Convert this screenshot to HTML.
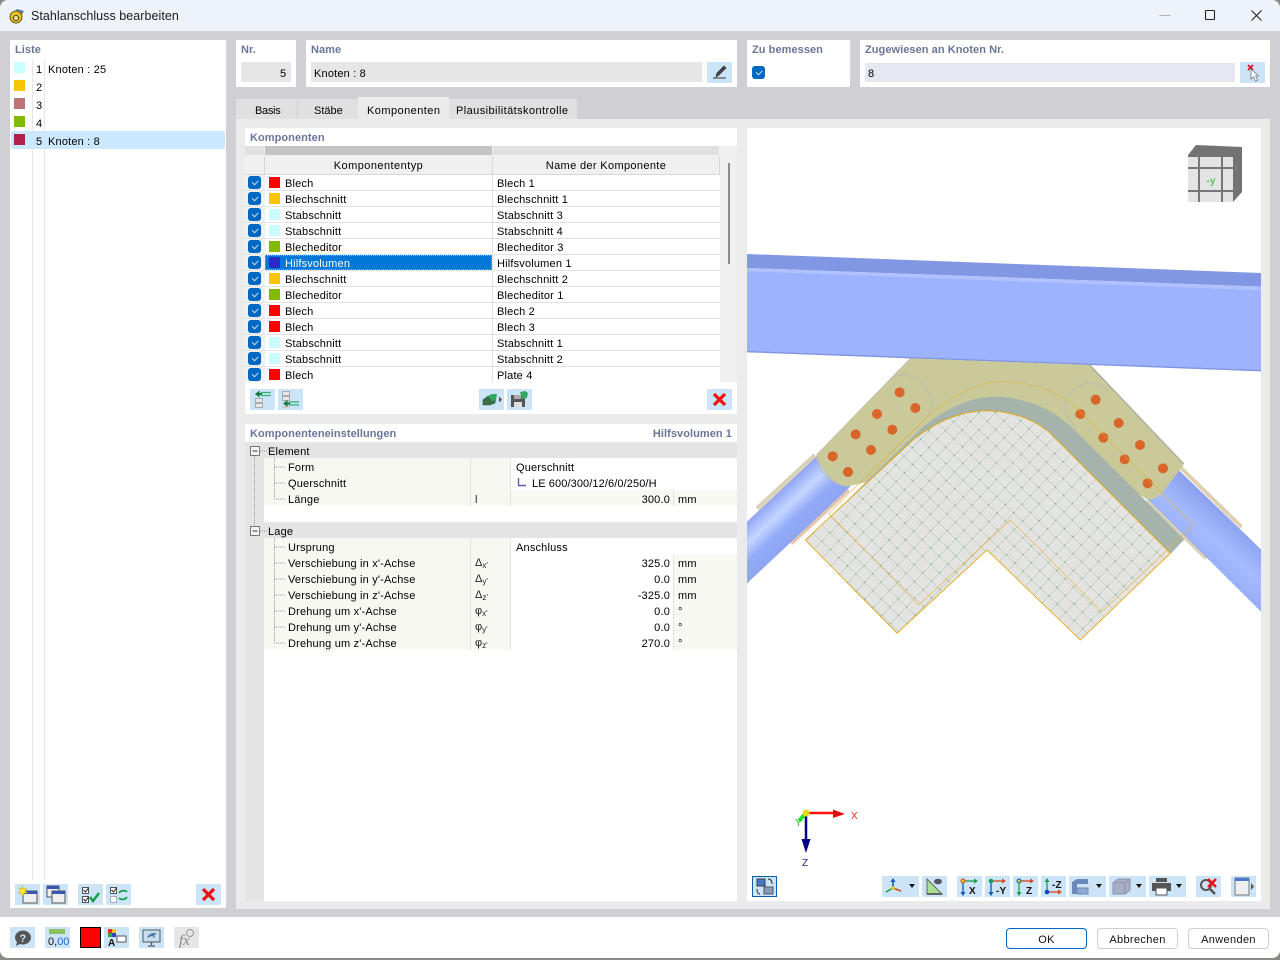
<!DOCTYPE html>
<html><head><meta charset="utf-8"><title>Stahlanschluss bearbeiten</title>
<style>
html,body{margin:0;padding:0;width:1280px;height:960px;overflow:hidden;background:#8a8a86}
*{box-sizing:border-box}
body{font-family:"Liberation Sans",sans-serif;font-size:11px;letter-spacing:.18px;color:#000;position:relative}
div,span,svg{position:absolute}
.t{white-space:nowrap;line-height:16px;height:16px;transform:translateY(1px)}
.h{font-weight:bold;color:#6a7698;white-space:nowrap;line-height:16px;letter-spacing:.06px;transform:translateY(1px)}
.bt{white-space:nowrap;top:928px;width:81px;height:21px;line-height:22px;text-align:center;border:1px solid #d0d0d0;border-radius:4px;background:#fff;color:#111;letter-spacing:.35px}
.p{background:#fff}
.b{width:25px;height:21px;background:#cce4f7}
.b svg,.w svg{left:0;top:0}
.w{width:37px;height:21px;background:#cce4f7}
.w::after{content:"";position:absolute;left:27px;top:7.500px;border-left:3.500px solid transparent;border-right:3.500px solid transparent;border-top:4px solid #111}
.s{width:11px;height:11px}
.c{width:13px;height:13px;background:#0067c0;border-radius:3px}
.c::after{content:"";position:absolute;left:4px;top:3.500px;width:5px;height:2.500px;border-left:1px solid #c4d9f2;border-bottom:1px solid #c4d9f2;transform:rotate(-45deg)}
.r{left:245px;width:475px;height:16px;border-bottom:1px solid #e2e2e2;background:#fff}
.r .cb{left:0;top:0;width:20px;height:15px;background:#f0f0f0}
.r .d{left:247px;top:0;width:1px;height:15px;background:#e2e2e2}
.r .c{left:3px;top:1px}
.r .s{left:24px;top:2px}
.r .a{left:40px;top:0}
.r .n{left:252px;top:0}
.g{left:245px;width:492px;height:16px;background:#e4e4e4}
.q{left:264px;width:473px;height:16px;background:#fff}
.q .t{transform:translateY(2px)}
.q .l{left:0;top:0;width:206px;height:16px;background:#f7f8f2}
.q .m{left:206px;top:0;width:41px;height:16px;background:#f7f8f2;border-left:1px solid #e2e2dc;border-right:1px solid #e2e2dc}
.q .u{left:409px;top:0;width:64px;height:16px;background:#f7f8f2;border-left:1px solid #e2e2dc}
.q .k{left:24px;top:0}
.q .v{right:67px;top:0}
.q .y{left:414px;top:0}
.q .z{left:252px;top:0}
.q .o{left:211px;top:3px;font-size:11px;letter-spacing:0;color:#222}
.o sub{font-size:8px;vertical-align:-2px;line-height:0}
</style></head><body>

<!-- window -->
<div style="left:0;top:0;width:1280px;height:958px;background:#d0d0d4;border-radius:8px 8px 8px 8px;overflow:hidden">
 <div style="left:0;top:0;width:1280px;height:31px;background:#eef3fa"></div>
 <div style="left:0;top:917px;width:1280px;height:41px;background:#fff"></div>
</div>
<svg style="left:8px;top:7px" width="18" height="18" viewBox="0 0 18 18"><path d="M4 6L9 2l7 2-3 5z" fill="#5b7fa8"/><path d="M2 10a6 6 0 0 1 12 0 6 6 0 0 1-12 0z" fill="#e8c020" stroke="#6a5a10"/><circle cx="8" cy="11" r="2.600" fill="#f8e890" stroke="#443" stroke-width="1"/></svg>
<div class="t" style="left:31px;top:7px;font-size:12.500px;letter-spacing:.05px;color:#1a1a1a">Stahlanschluss bearbeiten</div>
<svg style="left:1150px;top:5px" width="120" height="20" viewBox="0 0 120 20" fill="none"><path d="M9.500 10.500h11" stroke="#b0b0b0"/><rect x="55.500" y="5.500" width="9" height="9" rx="1" stroke="#222" stroke-width="1.100"/><path d="M101.500 5.500l10 10M111.500 5.500l-10 10" stroke="#222" stroke-width="1.100"/></svg>

<!-- list panel -->
<div class="p" style="left:10px;top:40px;width:216px;height:868px"></div>
<div class="h" style="left:15px;top:41px">Liste</div>
<div style="left:32px;top:59px;width:1px;height:821px;background:#e6e6e6"></div>
<div style="left:44px;top:59px;width:1px;height:821px;background:#e6e6e6"></div>
<div style="left:11px;top:131px;width:214px;height:18px;background:#cce8ff;border-radius:2px"></div>
<div class="s" style="left:14px;top:62px;background:#c8ffff"></div>
<div class="s" style="left:14px;top:80px;background:#f7c600"></div>
<div class="s" style="left:14px;top:98px;background:#bd7373"></div>
<div class="s" style="left:14px;top:116px;background:#80bb00"></div>
<div class="s" style="left:14px;top:134px;background:#b22248"></div>
<div class="t" style="left:36px;top:61px">1</div><div class="t" style="left:48px;top:61px">Knoten : 25</div>
<div class="t" style="left:36px;top:79px">2</div>
<div class="t" style="left:36px;top:97px">3</div>
<div class="t" style="left:36px;top:115px">4</div>
<div class="t" style="left:36px;top:133px">5</div><div class="t" style="left:48px;top:133px">Knoten : 8</div>

<div class="b" style="left:15px;top:884px"><svg width="25" height="21"><rect x="8" y="7" width="14" height="12" fill="#eee" stroke="#555"/><rect x="8" y="7" width="14" height="3" fill="#3a55b0"/><path d="M7 2l1.500 3 3-1-1.500 3 2.500 2-3.500 0-1.500 3-1-3-3.500 0 2.500-2-1.500-3 3 1z" fill="#ffe830" stroke="#c8a800" stroke-width=".5"/></svg></div>
<div class="b" style="left:43px;top:884px"><svg width="25" height="21"><rect x="4" y="2" width="12" height="11" fill="#eee" stroke="#555"/><rect x="4" y="2" width="12" height="3" fill="#3a55b0"/><rect x="9" y="7" width="13" height="12" fill="#eee" stroke="#555"/><rect x="9" y="7" width="13" height="3" fill="#3a55b0"/></svg></div>
<div class="b" style="left:78px;top:884px"><svg width="25" height="21" fill="none"><rect x="4.500" y="3.500" width="6" height="6" stroke="#555" fill="#fff"/><rect x="4.500" y="12.500" width="6" height="6" stroke="#555" fill="#fff"/><path d="M5.500 6l2 2 3-4M5.500 15l2 2 3-4" stroke="#222"/><path d="M12 13l3 4 6-8" stroke="#18a048" stroke-width="2.500"/></svg></div>
<div class="b" style="left:106px;top:884px"><svg width="25" height="21" fill="none"><rect x="4.500" y="3.500" width="6" height="6" stroke="#555" fill="#fff"/><rect x="4.500" y="12.500" width="6" height="6" stroke="#aaa" fill="#fff"/><path d="M5.500 6l2 2 3-4" stroke="#222"/><path d="M13 9c2-3 6-3 8-1M21 13c-2 3-6 3-8 1" stroke="#18a048" stroke-width="1.800"/></svg></div>
<div class="b" style="left:196px;top:884px"><svg width="25" height="21" fill="none"><path d="M7 5l11 11M18 5L7 16" stroke="#ee1111" stroke-width="3.200"/></svg></div>

<!-- top fields -->
<div class="p" style="left:236px;top:40px;width:60px;height:47px"></div>
<div class="h" style="left:241px;top:41px">Nr.</div>
<div style="left:241px;top:62px;width:50px;height:20px;background:#e6e6e6"></div>
<div class="t" style="left:280px;top:65px">5</div>

<div class="p" style="left:306px;top:40px;width:431px;height:47px"></div>
<div class="h" style="left:311px;top:41px">Name</div>
<div style="left:311px;top:62px;width:391px;height:20px;background:#e6e6e6"></div>
<div class="t" style="left:314px;top:65px">Knoten : 8</div>
<div class="b" style="left:707px;top:62px"><svg width="25" height="21" fill="none"><path d="M6 16h13" stroke="#333"/><path d="M9 15l1-4 7-7 2 2-7 7z" fill="#445" stroke="#333" stroke-width=".7"/></svg></div>

<div class="p" style="left:747px;top:40px;width:103px;height:47px"></div>
<div class="h" style="left:752px;top:41px">Zu bemessen</div>
<div class="c" style="left:752px;top:66px"></div>

<div class="p" style="left:860px;top:40px;width:410px;height:47px"></div>
<div class="h" style="left:865px;top:41px">Zugewiesen an Knoten Nr.</div>
<div style="left:865px;top:63px;width:370px;height:19px;background:#e6e7f0"></div>
<div class="t" style="left:868px;top:65px">8</div>
<div class="b" style="left:1240px;top:62px"><svg width="25" height="21" fill="none"><path d="M8 3l5 5M13 3L8 8" stroke="#e01030" stroke-width="1.800"/><path d="M11 7l0 10 2.500-2 2 4 2-1-2-4 3 0z" fill="#fff" stroke="#777" stroke-width=".8"/></svg></div>

<!-- tabs -->
<div style="left:236px;top:119px;width:1034px;height:790px;background:#ebebeb"></div>
<div style="left:236px;top:99px;width:61px;height:20px;background:#e0e0e0"></div>
<div style="left:298px;top:99px;width:60px;height:20px;background:#e0e0e0"></div>
<div style="left:358px;top:97px;width:91px;height:23px;background:#ebebeb"></div>
<div style="left:449px;top:99px;width:128px;height:20px;background:#e0e0e0"></div>
<div class="t" style="left:255px;top:102px;letter-spacing:-.3px">Basis</div>
<div class="t" style="left:314px;top:102px;letter-spacing:0">Stäbe</div>
<div class="t" style="left:367px;top:102px;letter-spacing:.45px">Komponenten</div>
<div class="t" style="left:456px;top:102px;letter-spacing:.42px">Plausibilitätskontrolle</div>

<!-- komponenten -->
<div class="p" style="left:245px;top:128px;width:492px;height:18px"></div>
<div class="h" style="left:250px;top:129px">Komponenten</div>
<div style="left:245px;top:146px;width:492px;height:236px;background:#f0f0f0"></div>
<div style="left:245px;top:146px;width:19px;height:9px;background:#e0e0e0"></div>
<div style="left:265px;top:146px;width:227px;height:9px;background:#c4c4c4"></div>
<div style="left:493px;top:146px;width:226px;height:9px;background:#e0e0e0"></div>
<div style="left:245px;top:156px;width:475px;height:19px;background:#f0f0f0;border-bottom:1px solid #d8d8d8"></div>
<div style="left:264px;top:156px;width:1px;height:18px;background:#d8d8d8"></div>
<div style="left:492px;top:156px;width:1px;height:18px;background:#d8d8d8"></div>
<div style="left:719px;top:156px;width:1px;height:18px;background:#d8d8d8"></div>
<div class="t" style="left:265px;width:227px;top:157px;text-align:center;letter-spacing:.45px">Komponententyp</div>
<div class="t" style="left:493px;width:226px;top:157px;text-align:center;letter-spacing:.35px">Name der Komponente</div>
<div style="left:728px;top:163px;width:2px;height:101px;background:#8a8a8a"></div>

<div class="r" style="top:175px"><div class="cb"></div><div class="d"></div><span class="c"></span><span class="s" style="background:#ff0000"></span><span class="t a">Blech</span><span class="t n">Blech 1</span></div>
<div class="r" style="top:191px"><div class="cb"></div><div class="d"></div><span class="c"></span><span class="s" style="background:#f7c600"></span><span class="t a">Blechschnitt</span><span class="t n">Blechschnitt 1</span></div>
<div class="r" style="top:207px"><div class="cb"></div><div class="d"></div><span class="c"></span><span class="s" style="background:#c8ffff"></span><span class="t a">Stabschnitt</span><span class="t n">Stabschnitt 3</span></div>
<div class="r" style="top:223px"><div class="cb"></div><div class="d"></div><span class="c"></span><span class="s" style="background:#c8ffff"></span><span class="t a">Stabschnitt</span><span class="t n">Stabschnitt 4</span></div>
<div class="r" style="top:239px"><div class="cb"></div><div class="d"></div><span class="c"></span><span class="s" style="background:#80bb00"></span><span class="t a">Blecheditor</span><span class="t n">Blecheditor 3</span></div>
<div class="r" style="top:255px"><div class="cb"></div><div class="d"></div><span class="c"></span><div style="left:20px;top:0;width:227px;height:15px;background:#0078d7;border:1px dotted #ff9a30"></div><span class="s" style="background:#2a2acc"></span><span class="t a" style="color:#fff">Hilfsvolumen</span><span class="t n">Hilfsvolumen 1</span></div>
<div class="r" style="top:271px"><div class="cb"></div><div class="d"></div><span class="c"></span><span class="s" style="background:#f7c600"></span><span class="t a">Blechschnitt</span><span class="t n">Blechschnitt 2</span></div>
<div class="r" style="top:287px"><div class="cb"></div><div class="d"></div><span class="c"></span><span class="s" style="background:#80bb00"></span><span class="t a">Blecheditor</span><span class="t n">Blecheditor 1</span></div>
<div class="r" style="top:303px"><div class="cb"></div><div class="d"></div><span class="c"></span><span class="s" style="background:#ff0000"></span><span class="t a">Blech</span><span class="t n">Blech 2</span></div>
<div class="r" style="top:319px"><div class="cb"></div><div class="d"></div><span class="c"></span><span class="s" style="background:#ff0000"></span><span class="t a">Blech</span><span class="t n">Blech 3</span></div>
<div class="r" style="top:335px"><div class="cb"></div><div class="d"></div><span class="c"></span><span class="s" style="background:#c8ffff"></span><span class="t a">Stabschnitt</span><span class="t n">Stabschnitt 1</span></div>
<div class="r" style="top:351px"><div class="cb"></div><div class="d"></div><span class="c"></span><span class="s" style="background:#c8ffff"></span><span class="t a">Stabschnitt</span><span class="t n">Stabschnitt 2</span></div>
<div class="r" style="top:367px;height:15px;border-bottom:0"><div class="cb"></div><div class="d"></div><span class="c"></span><span class="s" style="background:#ff0000"></span><span class="t a">Blech</span><span class="t n">Plate 4</span></div>

<div class="p" style="left:245px;top:382px;width:492px;height:32px"></div>
<div class="b" style="left:250px;top:389px"><svg width="25" height="21" fill="none"><rect x="5.500" y="9.500" width="7" height="4" fill="#e8e8e8" stroke="#aaa"/><rect x="5.500" y="14.500" width="7" height="4" fill="#e8e8e8" stroke="#aaa"/><path d="M11 3.500h10M11 6.500h10" stroke="#30b070" stroke-width="1.200"/><path d="M5 5l4.500-3.500v7z" fill="#107a38"/><path d="M8 5h4" stroke="#107a38" stroke-width="2"/></svg></div>
<div class="b" style="left:278px;top:389px"><svg width="25" height="21" fill="none"><rect x="4.500" y="2.500" width="7" height="4" fill="#e8e8e8" stroke="#aaa"/><rect x="4.500" y="7.500" width="7" height="4" fill="#e8e8e8" stroke="#aaa"/><rect x="4.500" y="17" width="7" height="2" fill="#ccc"/><path d="M5 14.500l4.500-3.500v7z" fill="#107a38"/><path d="M8 14.500h4" stroke="#107a38" stroke-width="2"/><path d="M11 13h10M11 16h10" stroke="#30b070" stroke-width="1.200"/></svg></div>
<div class="b" style="left:479px;top:389px"><svg width="25" height="21" fill="none"><path d="M4 11l5-4h8l-1 7-5 2H4z" fill="#3a6e48" stroke="#2a5a38" stroke-width=".6"/><path d="M9 7l4-2h5l-1 6-4 1z" fill="#30a860"/><path d="M20 7.500l3 3-3 3z" fill="#555"/></svg></div>
<div class="b" style="left:507px;top:389px"><svg width="25" height="21" fill="none"><path d="M4 6h12l2 2v10H4z" fill="#555"/><rect x="7" y="6" width="7" height="4" fill="#aaa"/><rect x="7" y="13" width="8" height="5" fill="#ddd"/><path d="M13 3l5-1 3 2-1 5-5 1z" fill="#30a860"/></svg></div>
<div class="b" style="left:707px;top:389px"><svg width="25" height="21" fill="none"><path d="M7 5l11 11M18 5L7 16" stroke="#ee1111" stroke-width="3.200"/></svg></div>

<!-- settings -->
<div class="p" style="left:245px;top:424px;width:492px;height:477px"></div>
<div class="h" style="left:250px;top:425px">Komponenteneinstellungen</div>
<div class="h" style="right:548px;top:425px">Hilfsvolumen 1</div>
<div style="left:245px;top:442px;width:19px;height:459px;background:#e4e4e4"></div>
<div class="g" style="top:442px"></div>
<div class="t" style="left:268px;top:443px">Element</div>

<div class="q" style="top:458px"><div class="l"></div><div class="m"></div><span class="t k">Form</span><span class="t z">Querschnitt</span></div>
<div class="q" style="top:474px"><div class="l"></div><div class="m"></div><span class="t k">Querschnitt</span><svg style="left:252px;top:2px" width="12" height="12" fill="none"><path d="M2.500 2v7.500H10" stroke="#5a5ea8" stroke-width="1.400"/></svg><span class="t" style="left:268px;top:0;letter-spacing:.1px">LE 600/300/12/6/0/250/H</span></div>
<div class="q" style="top:490px;background:#f7f8f2"><div class="l"></div><div class="m"></div><div class="u"></div><span class="t k">Länge</span><span class="o" style="top:2px;line-height:16px">l</span><span class="t v">300.0</span><span class="t y">mm</span></div>

<div class="g" style="top:522px"></div>
<div class="t" style="left:268px;top:523px">Lage</div>

<div class="q" style="top:538px"><div class="l"></div><div class="m"></div><span class="t k">Ursprung</span><span class="t z">Anschluss</span></div>
<div class="q" style="top:554px"><div class="l"></div><div class="m"></div><div class="u"></div><span class="t k">Verschiebung in x'-Achse</span><span class="o">Δ<sub>x'</sub></span><span class="t v">325.0</span><span class="t y">mm</span></div>
<div class="q" style="top:570px"><div class="l"></div><div class="m"></div><div class="u"></div><span class="t k">Verschiebung in y'-Achse</span><span class="o">Δ<sub>y'</sub></span><span class="t v">0.0</span><span class="t y">mm</span></div>
<div class="q" style="top:586px"><div class="l"></div><div class="m"></div><div class="u"></div><span class="t k">Verschiebung in z'-Achse</span><span class="o">Δ<sub>z'</sub></span><span class="t v">-325.0</span><span class="t y">mm</span></div>
<div class="q" style="top:602px"><div class="l"></div><div class="m"></div><div class="u"></div><span class="t k">Drehung um x'-Achse</span><span class="o">φ<sub>x'</sub></span><span class="t v">0.0</span><span class="t y">°</span></div>
<div class="q" style="top:618px"><div class="l"></div><div class="m"></div><div class="u"></div><span class="t k">Drehung um y'-Achse</span><span class="o">φ<sub>y'</sub></span><span class="t v">0.0</span><span class="t y">°</span></div>
<div class="q" style="top:634px"><div class="l"></div><div class="m"></div><div class="u"></div><span class="t k">Drehung um z'-Achse</span><span class="o">φ<sub>z'</sub></span><span class="t v">270.0</span><span class="t y">°</span></div>

<svg style="left:245px;top:442px" width="45" height="212" fill="none">
<rect x="5.500" y="4.500" width="9" height="9" fill="#f4f4f4" stroke="#777"/><path d="M7.500 9h5" stroke="#333"/>
<rect x="5.500" y="84.500" width="9" height="9" fill="#f4f4f4" stroke="#777"/><path d="M7.500 89h5" stroke="#333"/>
<path d="M9.500 14v70M15 9h7M15 89h7M29.500 16v40M29.500 96v104" stroke="#999" stroke-dasharray="1 1"/>
<path d="M29 25h12M29 41h12M29 57h12M29 105h12M29 121h12M29 137h12M29 153h12M29 169h12M29 185h12M29 201h12" stroke="#999" stroke-dasharray="1 1"/>
</svg>

<!-- viewport -->
<div class="p" style="left:747px;top:128px;width:514px;height:773px"></div>
<svg style="left:747px;top:128px" width="514" height="743" viewBox="0 0 514 743">
<defs>
<pattern id="gr" patternUnits="userSpaceOnUse" width="35.500" height="35.500" patternTransform="rotate(44 175 600)">
<path d="M0 0H35.500M0 0V35.500" stroke="#a4bca6" stroke-width="2.400" fill="none"/><circle cx="0" cy="0" r="1.600" fill="#168a22"/><circle cx="35.500" cy="0" r="1.600" fill="#168a22"/><circle cx="0" cy="35.500" r="1.600" fill="#168a22"/><circle cx="35.500" cy="35.500" r="1.600" fill="#168a22"/>
</pattern>
<pattern id="fine" patternUnits="userSpaceOnUse" width="7" height="7" patternTransform="rotate(44)"><path d="M0 0H7M0 0V7" stroke="#8ea596" stroke-width="1.200" fill="none"/></pattern>
<linearGradient id="tl" gradientUnits="userSpaceOnUse" x1="40" y1="505" x2="165" y2="640"><stop offset="0" stop-color="#8ea4f4"/><stop offset=".28" stop-color="#c4d6ff"/><stop offset=".5" stop-color="#93aaf8"/><stop offset="1" stop-color="#8ba1ec"/></linearGradient>
<linearGradient id="tr" gradientUnits="userSpaceOnUse" x1="1410" y1="500" x2="1290" y2="640"><stop offset="0" stop-color="#8ca2ee"/><stop offset=".45" stop-color="#a6bbff"/><stop offset="1" stop-color="#8fa6f4"/></linearGradient>
</defs>
<g transform="translate(0 212) scale(.33333)" fill="none">
 <!-- beam -->
 <path d="M0 -258L1542 -201V-160L0 -216z" fill="#8297e3"/>
 <path d="M0 -216L1542 -160V-150L0 -207z" fill="#aec2ff"/>
 <path d="M0 -207L1542 -150V92L0 35z" fill="#9db3ff"/>
 <path d="M0 35L1542 92" stroke="#8094e0" stroke-width="4"/>
 <!-- tan strips -->
 <path d="M26 500L200 340L208 350L34 510z" fill="#d6d4b8"/><path d="M36 508L205 352" stroke="#f0d2ae" stroke-width="3"/>
 <path d="M128 605L300 445L308 455L136 615z" fill="#d6cdb8"/><path d="M136 610L305 450" stroke="#f2bda0" stroke-width="4"/>
 <path d="M1305 378L1487 556L1480 566L1298 388z" fill="#d6d4b8"/><path d="M1300 385L1482 562" stroke="#f0c8a4" stroke-width="4"/>
 <path d="M1205 475L1382 650L1374 660L1197 485z" fill="#d6d4b8"/><path d="M1208 482L1378 652" stroke="#f2bda0" stroke-width="3"/>
 <!-- tubes -->
 <path d="M0 545L208 350L310 440L0 730z" fill="url(#tl)"/>
 <path d="M1290 385L1542 628V815L1195 470z" fill="url(#tr)"/>
 <!-- gusset -->
 <path d="M490 55L1028 75L1310 375L1240 465Q1222 480 1200 478L900 300L300 440Q240 430 208 345z" fill="#c9c99a"/>
 <path d="M1028 75L1310 372" stroke="#b2b2a4" stroke-width="5"/>
 <path d="M490 55L208 345" stroke="#bcbca4" stroke-width="2"/>
 <path d="M208 348Q225 425 300 440" stroke="#b8b8ac" stroke-width="3"/>
 <path d="M430 118Q480 85 530 135Q575 190 540 228" stroke="#b9b9b2" stroke-width="2.500"/>
 <path d="M1085 150Q1020 105 975 155Q925 215 990 262" stroke="#b9b9b2" stroke-width="2.500"/>
 <!-- bolts -->
 <g fill="#d9652a"><circle cx="458" cy="157" r="15"/><circle cx="505" cy="204" r="15"/><circle cx="390" cy="222" r="15"/><circle cx="436" cy="269" r="15"/><circle cx="326" cy="283" r="15"/><circle cx="372" cy="330" r="15"/><circle cx="257" cy="349" r="15"/><circle cx="303" cy="396" r="15"/><circle cx="1046" cy="179" r="15"/><circle cx="1000" cy="222" r="15"/><circle cx="1115" cy="249" r="15"/><circle cx="1069" cy="293" r="15"/><circle cx="1179" cy="315" r="15"/><circle cx="1133" cy="358" r="15"/><circle cx="1248" cy="385" r="15"/><circle cx="1202" cy="430" r="15"/></g>
 <!-- dark band -->
 <path d="M180 598L520 268Q640 168 750 170Q880 175 975 262L1312 598L1272 640L900 270L500 300z" fill="#aab6b0"/>
 <path d="M180 598L520 268Q640 168 750 170Q880 175 975 262L1312 598L1272 640L900 270L500 300z" fill="url(#fine)"/>
 <!-- main plate -->
 <path d="M175 600L500 298Q610 212 720 212Q830 215 905 275L1270 640L1000 900L720 630L450 880z" fill="#e3e3e1"/>
 <path d="M175 600L500 298Q610 212 720 212Q830 215 905 275L1270 640L1000 900L720 630L450 880z" fill="url(#gr)"/>
 <path d="M175 600L500 298Q610 212 720 212Q830 215 905 275L1270 640L1000 900L720 630L450 880z" stroke="#e8a400" stroke-width="2.500"/>
 <!-- back outline -->
 <path d="M245 520L540 232Q660 125 770 125Q880 128 970 185L1340 555L1065 815L790 540L515 795z" stroke="#e8ac30" stroke-width="1.600"/>
</g>
<!-- cube -->
<path d="M441 29V27L449 17L495 19V64L486 74V29z" fill="#737373"/>
<rect x="441" y="29" width="45" height="45" fill="#e4e4e4"/>
<path d="M452 29V74M475 29V74M441 40H486M441 63H486" stroke="#777" stroke-width="2"/>
<text x="464" y="56" text-anchor="middle" font-family="Liberation Sans" font-size="10" font-weight="bold" fill="#5cc060">-y</text>
<!-- axes -->
<path d="M59 685H88" stroke="#ff1010" stroke-width="2.500"/><path d="M98 686L86 681.500V690z" fill="#e01010"/>
<path d="M59 686V714" stroke="#000080" stroke-width="2.500"/><path d="M59 725L54.500 711H63.500z" fill="#000080"/>
<path d="M58 686L52 693" stroke="#28e028" stroke-width="4"/>
<circle cx="59" cy="685" r="3.500" fill="#e8d820"/>
<text x="104" y="691" font-family="Liberation Sans" font-size="10" fill="#ff2020">X</text>
<text x="55" y="738" font-family="Liberation Sans" font-size="10" fill="#202090">Z</text>
<text x="48" y="698" font-family="Liberation Sans" font-size="10" fill="#20c020">Y</text>
</svg>

<!-- viewport toolbar -->
<div class="b" style="left:752px;top:876px;background:#cce4f7;border:1.500px solid #0b5ea8"><svg style="left:-1px;top:-1px" width="25" height="21" fill="none"><rect x="5" y="3" width="8" height="7" fill="#4a78c0" stroke="#345"/><rect x="12" y="11" width="9" height="7" fill="#8a9cb8" stroke="#556"/><path d="M16 3c3 0 4 2 4 5M8 18c-2 0-3-2-3-5" stroke="#444" stroke-width="1.200"/></svg></div>
<div class="w" style="left:882px;top:876px"><svg width="25" height="21" fill="none"><path d="M11 12V4" stroke="#0a58c0" stroke-width="1.500"/><path d="M11 2l2.500 4h-5z" fill="#0a58c0"/><path d="M11 12l8 3" stroke="#d84818" stroke-width="1.500"/><path d="M11 12l-7 4" stroke="#18a048" stroke-width="1.500"/><circle cx="11" cy="12" r="1.800" fill="#e8c820"/></svg></div>
<div class="b" style="left:922px;top:876px"><svg width="25" height="21" fill="none"><path d="M5 18V3l15 15z" fill="#a8e098" stroke="#666"/><path d="M5 18h15" stroke="#666" stroke-width="2"/><ellipse cx="16" cy="5.500" rx="4" ry="2.800" fill="#556"/></svg></div>
<div class="b" style="left:957px;top:876px"><svg width="25" height="21" fill="none"><path d="M6 5h12" stroke="#18a048" stroke-width="1.300"/><path d="M21 5l-4-2.500v5z" fill="#18a048"/><path d="M6 5v12" stroke="#0a58c0" stroke-width="1.300"/><path d="M6 20l-2.500-4h5z" fill="#0a58c0"/><circle cx="6" cy="5" r="2" fill="#e8c820" stroke="#d84818"/><text x="12" y="18" font-family="Liberation Sans" font-size="10" font-weight="bold" fill="#111">X</text></svg></div>
<div class="b" style="left:985px;top:876px"><svg width="25" height="21" fill="none"><path d="M6 5h12" stroke="#d84818" stroke-width="1.300"/><path d="M21 5l-4-2.500v5z" fill="#d84818"/><path d="M6 5v12" stroke="#0a58c0" stroke-width="1.300"/><path d="M6 20l-2.500-4h5z" fill="#0a58c0"/><circle cx="6" cy="5" r="2.300" fill="#18a048"/><text x="11" y="18" font-family="Liberation Sans" font-size="10" font-weight="bold" fill="#111">-Y</text></svg></div>
<div class="b" style="left:1013px;top:876px"><svg width="25" height="21" fill="none"><path d="M6 5h12" stroke="#d84818" stroke-width="1.300"/><path d="M21 5l-4-2.500v5z" fill="#d84818"/><path d="M6 5v12" stroke="#18a048" stroke-width="1.300"/><path d="M6 20l-2.500-4h5z" fill="#18a048"/><circle cx="6" cy="5" r="2" fill="#e8c820" stroke="#0a58c0"/><text x="13" y="18" font-family="Liberation Sans" font-size="10" font-weight="bold" fill="#111">Z</text></svg></div>
<div class="b" style="left:1041px;top:876px"><svg width="25" height="21" fill="none"><path d="M6 16h12" stroke="#d84818" stroke-width="1.300"/><path d="M21 16l-4-2.500v5z" fill="#d84818"/><path d="M6 16V5" stroke="#18a048" stroke-width="1.300"/><path d="M6 2l-2.500 4h5z" fill="#18a048"/><circle cx="6" cy="16" r="2.300" fill="#0a48c0"/><text x="11" y="12" font-family="Liberation Sans" font-size="10" font-weight="bold" fill="#111">-Z</text></svg></div>
<div class="w" style="left:1069px;top:876px"><svg width="25" height="21" fill="none"><path d="M3 6l5-3h11v5H8v10H3z" fill="#6a88b8"/><path d="M8 12h11v6H8z" fill="#8ea8d0" stroke="#6a88b8"/></svg></div>
<div class="w" style="left:1109px;top:876px"><svg width="25" height="21" fill="none"><path d="M4 7l5-4h12v11l-5 4H4z" fill="#a8b0c8" stroke="#8a90a8"/><path d="M4 7h12v11M16 7l5-4" stroke="#8a90a8"/></svg></div>
<div class="w" style="left:1149px;top:876px"><svg width="25" height="21" fill="none"><rect x="7" y="2" width="11" height="4" fill="#555"/><path d="M3 7h19v8H3z" fill="#555"/><rect x="7" y="12" width="11" height="7" fill="#fff" stroke="#555"/></svg></div>
<div class="b" style="left:1196px;top:876px"><svg width="25" height="21" fill="none"><circle cx="10" cy="9" r="5" stroke="#555" stroke-width="2"/><path d="M14 13l5 5" stroke="#555" stroke-width="2.500"/><path d="M12 3l8 8M20 3l-8 8" stroke="#ee1111" stroke-width="2.400"/></svg></div>
<div class="b" style="left:1231px;top:876px"><svg width="25" height="21" fill="none"><rect x="4" y="2" width="14" height="17" fill="#eee" stroke="#777"/><rect x="4" y="2" width="14" height="3" fill="#4a78d0"/><path d="M20 7l3 3.500-3 3.500z" fill="#555"/></svg></div>

<!-- footer -->
<div class="b" style="left:10px;top:927px"><svg width="25" height="21" fill="none"><path d="M5 10a8 7 0 1 1 5 7l-4 2 1-4a7 7 0 0 1-2-5z" fill="#555"/><text x="9.500" y="15" font-family="Liberation Sans" font-size="11" font-weight="bold" fill="#cce4f7">?</text></svg></div>
<div class="b" style="left:45px;top:927px"><svg width="25" height="21" fill="none"><rect x="4" y="2" width="16" height="5" fill="#8ac060"/><text x="3" y="18" font-family="Liberation Sans" font-size="11" letter-spacing="0" fill="#111">0,<tspan fill="#1a6ad8">00</tspan></text></svg></div>
<div style="left:80px;top:927px;width:21px;height:21px;background:#ff0000;border:1px solid #000"></div>
<div class="b" style="left:104px;top:927px"><svg width="25" height="21" fill="none"><rect x="4" y="2" width="4" height="4" fill="#e03030"/><rect x="8" y="2" width="4" height="4" fill="#e8c820"/><rect x="4" y="6" width="4" height="4" fill="#30a040"/><rect x="8" y="6" width="4" height="4" fill="#3040d0"/><text x="4" y="19" font-family="Liberation Sans" font-size="10" font-weight="bold" fill="#111" letter-spacing="0">A</text><rect x="13" y="9" width="9" height="6" fill="#fff" stroke="#555"/></svg></div>
<div class="b" style="left:139px;top:927px"><svg width="25" height="21" fill="none"><rect x="4" y="3" width="17" height="12" fill="#c8dcec" stroke="#556"/><path d="M8 11c2-5 7-6 10-4l-3 1 1 3-3-2z" fill="#4a78a8"/><path d="M12.500 15v3M9 19h7" stroke="#556" stroke-width="1.300"/></svg></div>
<div class="b" style="left:174px;top:927px;background:#e6e6e6"><svg width="25" height="21" fill="none"><text x="5" y="18" font-family="Liberation Serif" font-style="italic" font-size="15" fill="#888" letter-spacing="0">fx</text><circle cx="16" cy="6" r="3.500" stroke="#999"/></svg></div>

<div class="bt" style="left:1006px;border:1.500px solid #0067c0">OK</div>
<div class="bt" style="left:1097px">Abbrechen</div>
<div class="bt" style="left:1188px">Anwenden</div>

</body></html>
